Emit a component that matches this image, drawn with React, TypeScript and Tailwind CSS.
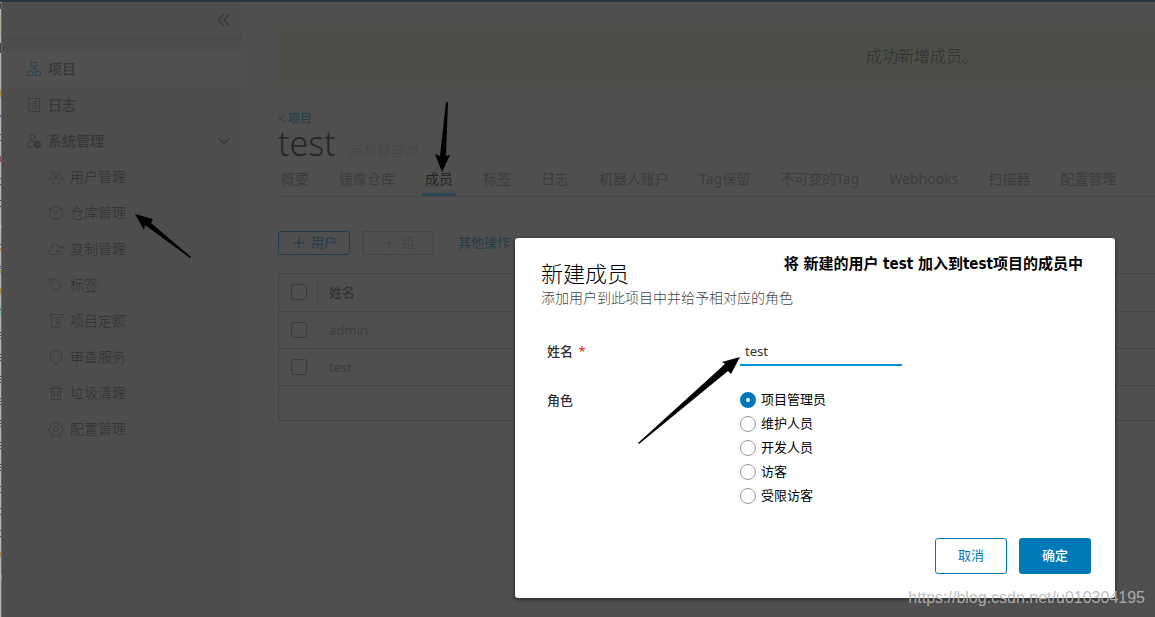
import { useState } from "react";
import type { ReactNode } from "react";
import clsx from "clsx";

function Icon({ children, className }: { children: ReactNode; className?: string }) {
  return (
    <svg
      viewBox="0 0 16 16"
      fill="none"
      stroke="currentColor"
      strokeWidth="1"
      strokeLinejoin="round"
      strokeLinecap="round"
      className={clsx("w-4 h-4 shrink-0", className)}
      aria-hidden="true"
    >
      {children}
    </svg>
  );
}

const ICONS = {
  org: (
    <>
      <rect x="5.5" y="1.5" width="5" height="4" />
      <rect x="1.5" y="10.5" width="5" height="4" />
      <rect x="9.5" y="10.5" width="5" height="4" />
      <path d="M8 6v2M3.5 9.5 6 8h4l2.5 1.5" />
    </>
  ),
  logs: (
    <>
      <path d="M3.500 1.500h10v13h-10z" />
      <path d="M6 4.500h.2M8 4.500h3M6 6.500h.2M8 6.500h3M6 8.500h.2M8 8.500h3M6 10.500h.2M8 10.500h3" />
    </>
  ),
  admin: (
    <>
      <circle cx="6.500" cy="4" r="2.600" />
      <path d="M6.500 14H1.500v-2.500c0-2 2-3.200 4.500-3.200h1.500" />
      <circle cx="11.500" cy="11.500" r="2.200" strokeWidth="2" />
      <path
        d="M11.500 8v7M8 11.500h7M9 9l5 5M14 9l-5 5"
        strokeWidth="1.200"
      />
      <circle cx="11.500" cy="11.500" r="1.300" fill="#4d4d4d" stroke="none" />
    </>
  ),
  users: (
    <>
      <circle cx="8" cy="5.500" r="2" />
      <path d="M4.500 14.500v-3c0-1.800 1.500-3 3.500-3s3.500 1.200 3.500 3v3z" />
      <path d="M5 2.500a1.800 1.800 0 1 0-1.500 3.400M11 2.500a1.800 1.800 0 1 1 1.500 3.400M1 10.500c0-1.700 1-3 2.500-3.300M15 10.500c0-1.700-1-3-2.500-3.300M1 10.500h1.500M13.500 10.500H15" />
    </>
  ),
  cube: (
    <>
      <path d="M8 1.200 14.200 4v7.800L8 14.800 1.800 11.800V4z" />
      <path d="M1.800 4 8 7l6.200-3M8 7v7.800" />
    </>
  ),
  cloud: (
    <>
      <path d="M13.500 11.500c-.5 1.300-1.500 2-3 2H3A2.700 2.700 0 0 1 .6 10.700 2.800 2.800 0 0 1 3 8 4.400 4.400 0 0 1 7.300 3.300a4.500 4.500 0 0 1 4 2" />
      <path d="M11 6.500h4.500M14 5l1.500 1.500L14 8M13.500 10H8.500M10 8.500 8.500 10l1.500 1.500" />
    </>
  ),
  tag: (
    <>
      <path d="M1.700 2.500v5l6.800 6.500 5.500-5.500L7.300 2.500z" />
      <circle cx="4.500" cy="5.200" r=".5" />
    </>
  ),
  quota: (
    <>
      <path d="M1 3.500v-2h14v3M3.500 1.500v12.500h9V1.500" />
      <path d="M7.500 4.500h3M8.500 6.500h2M7.500 8.500h3M8.500 10.500h2" />
    </>
  ),
  shield: <path d="M8 1.200c1.700 1.300 3.700 1.900 6 2v4.300c0 3.300-2.300 5.700-6 7.300-3.700-1.600-6-4-6-7.300V3.200c2.300-.1 4.300-.7 6-2z" />,
  trash: <path d="M1.500 3.500h13M5.500 3V1.500h5V3M3.500 4v10.500h9V4M6.500 6v6M9.500 6v6" />,
  cog: (
    <>
      <circle cx="8" cy="8" r="2.600" />
      <path d="M6.800 1.200h2.400l.5 1.700 1.200.5 1.600-.8 1.600 1.600-.8 1.600.5 1.200 1.500.5v2.400l-1.600.5-.5 1.200.8 1.600-1.600 1.600-1.600-.8-1.200.5-.5 1.500H6.800l-.5-1.600-1.200-.5-1.600.8-1.600-1.600.8-1.600-.5-1.200-1.500-.4V7.300l1.600-.5.5-1.200-.8-1.600 1.600-1.600 1.600.8 1.200-.5z" />
    </>
  ),
};

const SUB_ITEMS = [
  { icon: ICONS.users, label: "用户管理" },
  { icon: ICONS.cube, label: "仓库管理" },
  { icon: ICONS.cloud, label: "复制管理" },
  { icon: ICONS.tag, label: "标签" },
  { icon: ICONS.quota, label: "项目定额" },
  { icon: ICONS.shield, label: "审查服务" },
  { icon: ICONS.trash, label: "垃圾清理" },
  { icon: ICONS.cog, label: "配置管理" },
];

const TABS = [
  "概要",
  "镜像仓库",
  "成员",
  "标签",
  "日志",
  "机器人账户",
  "Tag保留",
  "不可变的Tag",
  "Webhooks",
  "扫描器",
  "配置管理",
];

const ROLES = ["项目管理员", "维护人员", "开发人员", "访客", "受限访客"];

// sliver of the window behind the browser
function WindowEdge() {
  return (
    <svg width="2" height="615" viewBox="0 2 2 615" className="shrink-0" aria-hidden="true">
      <path d="M0 2h1v615H0z" fill="#b5b5b5" />
      <path d="M1 2h1v615H1z" fill="#686868" />
      <path d="M0 15h1v21H0z" fill="#a3b196" />
      <path
        d="M.5 3v6M.5 43v10M.5 134v1M.5 140v1M.5 178v1M.5 184v1M.5 200v1M.5 206v1M.5 244v1M.5 266v1M.5 309v1M.5 332v1M.5 335v1M.5 338v1M.5 354v1M.5 357v1M.5 360v1M.5 376v1M.5 379v1M.5 382v1M.5 398v1M.5 401v1M.5 404v1M.5 420v1M.5 423v1M.5 426v1M.5 442v1M.5 445v1M.5 448v1M.5 464v1M.5 467v1M.5 470v1M.5 486v1M.5 492v1M.5 508v1M.5 514v1M.5 530v1M.5 536v1"
        stroke="#444"
      />
      <path d="M.5 90v7M1.500 225v3M.5 248v3M.5 270v3M.5 288v6M.5 552v5M1.500 574v6" stroke="#b08c48" />
      <path d="M.5 115v2M.5 268v1" stroke="#426b91" />
      <path d="M.5 156v6" stroke="#914667" />
      <path d="M.5 306v3M.5 310v7" stroke="#7eb4b5" />
    </svg>
  );
}

function Sidebar() {
  return (
    <aside className="w-60 shrink-0 bg-[#4d4d4d] text-[#373737]">
      <div className="h-[37px] flex items-center justify-end pr-2.5 border-b border-[#474747]">
        <button type="button" aria-label="收起">
          <Icon>
            <path d="M7.500 2.500 2.500 8l5 5.500M13 2.500 8 8l5 5.500" strokeWidth="1.200" />
          </Icon>
        </button>
      </div>
      <nav className="pt-3 text-sm">
        <a href="#projects" className="h-9 flex items-center gap-1.5 pl-6 bg-[#515151] font-medium">
          <Icon className="text-[#2a4552]">{ICONS.org}</Icon>
          项目
        </a>
        <a href="#logs" className="h-9 flex items-center gap-1.5 pl-6 font-medium">
          <Icon className="text-[#3c3c3c]">{ICONS.logs}</Icon>
          日志
        </a>
        <button type="button" className="w-full h-9 flex items-center gap-1.5 pl-6 pr-2.5 font-medium">
          <Icon>{ICONS.admin}</Icon>
          系统管理
          <Icon className="ml-auto">
            <path d="M3 5.500 8 10.500l5-5" strokeWidth="1.300" />
          </Icon>
        </button>
        {SUB_ITEMS.map((item) => (
          <a key={item.label} href="#admin" className="h-9 flex items-center gap-1.5 pl-[46px]">
            <Icon className="text-[#3c3c3c]">{item.icon}</Icon>
            <span className="font-light text-[#303030]">{item.label}</span>
          </a>
        ))}
      </nav>
    </aside>
  );
}

function Checkbox({ label }: { label: string }) {
  return (
    <input
      type="checkbox"
      aria-label={label}
      className="appearance-none block w-4 h-4 ml-3 rounded-[3px] border border-[#3b3b3b]"
    />
  );
}

function MembersPage() {
  return (
    <main className="flex-1 min-w-0 overflow-hidden pl-9 pt-6 text-[#3c3c3c]">
      <div className="min-w-[1288px]">
        <div className="h-[60px] flex items-center justify-center bg-[#4c4e48] text-base leading-5 font-light text-[#2e2e2e]">
          成功新增成员。
        </div>

        <a href="#projects" className="block w-fit mt-6 text-xs leading-[18px] text-[#213e4c]">
          &lt; 项目
        </a>
        <div className="flex items-baseline gap-3 h-[34px]">
          <h1 className="text-[34px] leading-[30px] font-light text-[#262626]">test</h1>
          <em className="text-sm font-light text-[#444]">系统管理员</em>
        </div>

        <nav className="flex gap-6 h-[35px] border-b border-[#454545] text-sm">
          {TABS.map((tab) => (
            <a
              key={tab}
              href="#tab"
              className={clsx(
                "px-[3px] pt-[7px] whitespace-nowrap",
                tab === "成员" && "text-[#242424] border-b-3 border-[#284654]"
              )}
            >
              {tab}
            </a>
          ))}
        </nav>

        <div className="flex items-center mt-[34px] text-[13px]">
          <button
            type="button"
            className="w-[72px] h-6 flex items-center justify-center gap-1 rounded-[3px] border border-[#213e4c] text-[#213e4c]"
          >
            <Icon>
              <path d="M8 3v10M3 8h10" strokeWidth="1.200" />
            </Icon>
            用户
          </button>
          <button
            type="button"
            disabled
            className="w-[72px] h-6 ml-3 flex items-center justify-center gap-1 rounded-[3px] border border-[#444] text-[#444]"
          >
            <Icon>
              <path d="M8 3v10M3 8h10" strokeWidth="1.200" />
            </Icon>
            组
          </button>
          <button type="button" className="ml-6 flex items-center gap-1 text-[#213e4c]">
            其他操作
            <Icon>
              <path d="M3 5.500 8 11l5-5.500" />
            </Icon>
          </button>
        </div>

        <div className="mt-[18px] rounded-[3px] border border-[#434343]">
          <table className="w-full text-[13px] leading-4 text-left">
            <thead>
              <tr className="h-[37px] border-b border-[#464646] text-[#343434]">
                <th className="w-[39px]">
                  <div className="h-6 flex items-center border-r border-[#464646]">
                    <Checkbox label="全选" />
                  </div>
                </th>
                <th className="pl-[11px] font-medium">姓名</th>
              </tr>
            </thead>
            <tbody>
              {["admin", "test"].map((name) => (
                <tr key={name} className="h-[37px] border-b border-[#434343]">
                  <td>
                    <Checkbox label={name} />
                  </td>
                  <td className="pl-[11px]">{name}</td>
                </tr>
              ))}
            </tbody>
          </table>
          <div className="h-[34px]" />
        </div>
      </div>
    </main>
  );
}

function NewMemberDialog() {
  const [name, setName] = useState("test");
  const [role, setRole] = useState(ROLES[0]);

  return (
    <div
      role="dialog"
      aria-labelledby="dialog-title"
      className="absolute top-[238px] right-10 w-[600px] h-[360px] flex flex-col px-6 pt-[22px] pb-6 rounded-[3px] bg-white text-black shadow-[0_1px_3px_1px_rgba(0,0,0,0.4)]"
    >
      <h2 id="dialog-title" className="pl-0.5 text-[22px] leading-[26px] font-light">
        新建成员
      </h2>
      <p className="pl-0.5 text-sm leading-6 font-light text-[#444]">添加用户到此项目中并给予相对应的角色</p>

      <form className="flex-1 flex flex-col pt-7 pl-2 text-[13px]">
        <div className="flex items-center h-7">
          <label htmlFor="member-name" className="w-[193px] font-medium text-[#333]">
            姓名 <span className="ml-0.5 font-normal text-[#e12200]">*</span>
          </label>
          <input
            id="member-name"
            value={name}
            onChange={(e) => setName(e.target.value)}
            className="w-[162px] h-7 px-[5px] border-b-2 border-[#0094d2] text-[#333] outline-none"
          />
        </div>
        <fieldset className="flex pt-[22px]">
          <legend className="float-left w-[193px] leading-6 font-medium text-[#333]">角色</legend>
          <div>
            {ROLES.map((item) => (
              <label key={item} className="h-6 flex items-center gap-[5px]">
                <input
                  type="radio"
                  name="role"
                  checked={role === item}
                  onChange={() => setRole(item)}
                  className="appearance-none w-4 h-4 rounded-full border border-[#9a9a9a] checked:border-[6px] checked:border-[#0079b8]"
                />
                {item}
              </label>
            ))}
          </div>
        </fieldset>
        <div className="mt-auto flex justify-end gap-3">
          <button type="button" className="w-[72px] h-9 rounded-[3px] border border-[#0079b8] text-[#0079b8]">
            取消
          </button>
          <button type="button" className="w-[72px] h-9 rounded-[3px] bg-[#0079b8] text-white font-medium">
            确定
          </button>
        </div>
      </form>

      <p className="absolute top-[15px] right-8 text-[15px] leading-[22px] font-bold whitespace-nowrap font-['DejaVu_Sans_Condensed','Noto_Sans_CJK_SC',sans-serif]">
        将 新建的用户 test 加入到test项目的成员中
      </p>
    </div>
  );
}

function Arrows() {
  return (
    <svg
      width="1155"
      height="617"
      viewBox="0 0 1155 617"
      className="absolute top-0 left-0 pointer-events-none"
      aria-hidden="true"
    >
      <path d="M446 102h2l-2 54 4-1-8 17-7-18 5 2z" />
      <path d="M190 258l1-1-40-34 2-4-18-5 9 16 1-5z" />
      <path d="M638 443l1 1 89-73 3 3 9-17-18 5 3 2z" />
    </svg>
  );
}

export default function App() {
  return (
    <div className="relative min-h-screen overflow-hidden flex flex-col bg-[#4f4f4f] font-['Noto_Sans','Noto_Sans_CJK_SC',sans-serif]">
      <div className="h-0.5 bg-[#26353f]" />
      <div className="flex-1 flex">
        <WindowEdge />
        <Sidebar />
        <MembersPage />
      </div>
      <NewMemberDialog />
      <Arrows />
      <span className="absolute right-2.5 bottom-[7px] font-['Liberation_Sans',sans-serif] text-base text-[#b8b8b8]/90">
        https://blog.csdn.net/u010304195
      </span>
    </div>
  );
}
